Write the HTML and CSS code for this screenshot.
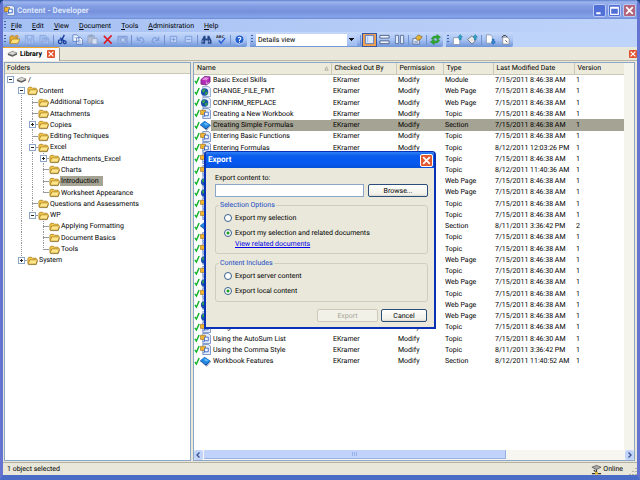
FILE: index.html
```html
<!DOCTYPE html>
<html lang="en">
<head>
<meta charset="utf-8">
<title>Content - Developer</title>
<link rel="stylesheet" href="styles.css">
</head>
<body>
<svg class="sprite" aria-hidden="true">
  <symbol id="folder" viewBox="0 0 12 12"><path d="M1 9.500V3.500l1-1h3l1 1h4v2" fill="#f3c74e" stroke="#a67c14" stroke-width=".8"/><path d="M1.200 10L3 5.300h8.500L10 10z" fill="#ffe58a" stroke="#a67c14" stroke-width=".8"/><path d="M1.500 10.500h8.500l1.500-4" fill="none" stroke="#6d5212" stroke-width=".6"/></symbol>
  <symbol id="drive" viewBox="0 0 12 12"><path d="M1 6l5-2.500 5 2v1.500L6 9.500 1 7.500z" fill="#555"/><path d="M1 6l5-2.500 5 2L6 8z" fill="#d8d8d4" stroke="#777" stroke-width=".5"/></symbol>
  <symbol id="check" viewBox="0 0 7 12"><path d="M1 6.500l1.800 2.500L6 2" fill="none" stroke="#12b428" stroke-width="1.700"/></symbol>
  <symbol id="module" viewBox="0 0 12 12"><path d="M1 5l4-3.500 6 .5v6l-4 3-6-1z" fill="#b12bb5" stroke="#5d1266" stroke-width=".7"/><path d="M2 5l3.500-2.500 4.500.500L7 6z" fill="#e58ae2"/><path d="M7 7v3l3-2" fill="none" stroke="#f0d0f0" stroke-width=".7"/></symbol>
  <symbol id="web" viewBox="0 0 12 12"><path d="M3 .5h6l2.500 2v9H3z" fill="#e9f0fc" stroke="#6b88bd" stroke-width=".7"/><circle cx="5" cy="6.500" r="4" fill="#1b4fae"/><path d="M2 5l2-2 2 1-1 2-2 1zM5 8l2-2 1.500 1L7 10z" fill="#35a548"/></symbol>
  <symbol id="topic" viewBox="0 0 12 12"><path d="M3 .5h6l2.500 2v9H3z" fill="#e4ecfb" stroke="#5878b5" stroke-width=".8"/><path d="M.5 2.500h5.500v4.500h-5.500z" fill="#f4b52f" stroke="#8d6418" stroke-width=".6"/><path d="M5 4.500h4v4H5z" fill="#fff" stroke="#2c59b8" stroke-width=".9"/><path d="M4 10l1-2" stroke="#2c59b8"/></symbol>
  <symbol id="section" viewBox="0 0 12 12"><path d="M0 5.500L5 1l7 5-5 5.500z" fill="#082d70"/><path d="M0 5L5 1l6.500 4.500-5 4z" fill="#2388e2"/><path d="M1 6.500l5.500 4.500 5-5" fill="none" stroke="#e5f1ff" stroke-width=".7"/><path d="M4 4l2-1 3 2-2 1z" fill="#6dbdf8"/></symbol>
  <symbol id="online" viewBox="0 0 12 12"><path d="M1 3.500l5-2 5 2-5 2.500z" fill="#aaa" stroke="#444" stroke-width=".7"/><path d="M6 6v3M1 10.500h4M7 10.500h4M3 6.500l2 2" stroke="#333" stroke-width="1.200"/><path d="M4.500 8.500h3v3h-3z" fill="#d9b42d"/></symbol>
  <symbol id="close" viewBox="0 0 10 10"><path d="M2 2l6 6M8 2L2 8" stroke="#fff" stroke-width="1.600"/></symbol>
</svg>

<div class="window">
  <header class="titlebar">
    <svg class="icon"><use href="#topic"/></svg>
    <h1>Content - Developer</h1>
    <button class="caption" aria-label="Minimize"><svg viewBox="0 0 10 10"><path d="M2 7.500h4" stroke="#fff" stroke-width="1.800"/></svg></button>
    <button class="caption" aria-label="Maximize"><svg viewBox="0 0 10 10"><path d="M1.500 2h7v6.500h-7zM1.500 3h7" fill="none" stroke="#fff"/></svg></button>
    <button class="caption dim-close" aria-label="Close"><svg><use href="#close"/></svg></button>
  </header>

  <nav class="menubar">
    <span class="grip"></span>
    <button><u>F</u>ile</button><button><u>E</u>dit</button><button><u>V</u>iew</button><button><u>D</u>ocument</button><button><u>T</u>ools</button><button><u>A</u>dministration</button><button><u>H</u>elp</button>
  </nav>

  <div class="toolbars">
    <div class="toolbar">
      <span class="grip"></span>
      <button class="tool" aria-label="Open"><svg viewBox="0 0 12 12"><path d="M1 10V3l1-1h3l1 1h3v3" fill="#e9b137" stroke="#9a6c12" stroke-width=".7"/><path d="M1 10.500L3.500 5.500H12L9.500 10.500z" fill="#ffe07a" stroke="#9a6c12" stroke-width=".7"/><path d="M7 1.500q3-1 3.500 2" fill="none" stroke="#e98a19"/></svg></button>
      <button class="tool" aria-label="Save" disabled><svg viewBox="0 0 12 12"><path d="M1.500 1.500h9v9h-9zM3.500 1.500v4h5v-4M4 10.500v-3h4v3" fill="#a5bfef" stroke="#8ba8e0"/></svg></button>
      <button class="tool" aria-label="Save all" disabled><svg viewBox="0 0 12 12"><path d="M1 1.500h6l1 1v6H1zM4 4.500h6.500v6H4zM6 4.500v2h3v-2" fill="#a5bfef" stroke="#8ba8e0"/></svg></button>
      <span class="sep"></span>
      <button class="tool" aria-label="Cut"><svg viewBox="0 0 12 12"><path d="M8 1L5 7M3.500 4L8 8" stroke="#173e9c" stroke-width="1.500"/><circle cx="3.500" cy="8.500" r="2" fill="none" stroke="#173e9c" stroke-width="1.300"/><circle cx="8.500" cy="9" r="1.500" fill="none" stroke="#173e9c" stroke-width="1.300"/></svg></button>
      <button class="tool" aria-label="Copy"><svg viewBox="0 0 12 12"><path d="M1 1h4.500l2 2v5H1zM5 4h4.500l2 2v5H5z" fill="#f2f6ff" stroke="#4a70bd" stroke-width=".8"/><path d="M6.500 7.500h3.500M6.500 9h3.500M2.500 4h2" stroke="#7a9bdb" stroke-width=".7"/></svg></button>
      <button class="tool" aria-label="Paste" disabled><svg viewBox="0 0 12 12"><path d="M1 2h7v8H1zM3 1h3v2H3z" fill="#b5bfd3" stroke="#8b9dc4" stroke-width=".8"/><path d="M5.500 5h5.500v6H5.500z" fill="#d8e1f3" stroke="#8b9dc4" stroke-width=".8"/></svg></button>
      <button class="tool" aria-label="Delete"><svg viewBox="0 0 12 12"><path d="M2 2l8.500 8.500M10.500 1.500L2 10.500" stroke="#dd1c24" stroke-width="1.700"/></svg></button>
      <button class="tool" aria-label="Capture" disabled><svg viewBox="0 0 12 12"><path d="M1 2.500h10v8H1z" fill="#9cb4e4" stroke="#7d99d4"/><circle cx="6.500" cy="6.500" r="2.500" fill="#bccef2" stroke="#7d99d4"/></svg></button>
      <span class="sep"></span>
      <button class="tool" aria-label="Undo" disabled><svg viewBox="0 0 12 12"><path d="M2.500 3v4h4M3 6.500q4-4.500 6-1t-2 4" fill="none" stroke="#7f9cdb" stroke-width="1.300"/></svg></button>
      <button class="tool" aria-label="Redo" disabled><svg viewBox="0 0 12 12"><path d="M9.500 3v4h-4M9 6.500q-4-4.500-6-1t2 4" fill="none" stroke="#7f9cdb" stroke-width="1.300"/></svg></button>
      <span class="sep"></span>
      <button class="tool" aria-label="Expand" disabled><svg viewBox="0 0 12 12"><path d="M2.500 2.500h7v7h-7zM6 4v4M4 6h4" fill="#b9cff8" stroke="#7b9ad9"/></svg></button>
      <button class="tool" aria-label="Collapse" disabled><svg viewBox="0 0 12 12"><path d="M2.500 2.500h7v7h-7zM4 6h4" fill="#b9cff8" stroke="#7b9ad9"/></svg></button>
      <span class="sep"></span>
      <button class="tool" aria-label="Find"><svg viewBox="0 0 12 12"><path d="M3 2h2v3h2V2h2l2.500 5v3.500H7.500V7h-3v3.500H.5V7z" fill="#27498c"/><path d="M2 7v2M9 7v2" stroke="#b5cbf5"/></svg></button>
      <button class="tool" aria-label="Spelling"><svg viewBox="0 0 12 12"><text x="0" y="4.500" class="abc">ABC</text><path d="M3 7l2.500 3L10 4.500" fill="none" stroke="#2a5fd0" stroke-width="1.600"/></svg></button>
      <span class="sep"></span>
      <button class="tool" aria-label="Help"><svg viewBox="0 0 12 12"><circle cx="6" cy="6" r="5" fill="#2461cf" stroke="#dce8ff" stroke-width=".9"/><path d="M4.500 4.500q1.500-2 3 0 0 1-1.500 2v1M6 8.500v1" fill="none" stroke="#fff" stroke-width="1.100"/></svg></button>
    </div>

    <div class="toolbar">
      <span class="grip"></span>
      <select class="view-select" aria-label="View"><option>Details view</option></select>
      <span class="sep"></span>
      <button class="tool pressed" aria-label="Single pane"><svg viewBox="0 0 12 12"><path d="M1.500 1.500h9v9h-9z" fill="#dce9ff" stroke="#5578bd"/><path d="M4 3v6" stroke="#9ab6ea"/></svg></button>
      <button class="tool" aria-label="Stacked panes"><svg viewBox="0 0 12 12"><path d="M1 1.500h10v3H1zM1 7.500h10v3H1z" fill="#eef4ff" stroke="#4d5f85"/></svg></button>
      <button class="tool" aria-label="Side by side panes"><svg viewBox="0 0 12 12"><path d="M1.500 1.500h3.500v9H1.500zM7 1.500h3.500v9H7z" fill="#dfeaff" stroke="#5c7099"/></svg></button>
      <span class="sep"></span>
      <button class="tool" aria-label="Properties"><svg viewBox="0 0 12 12"><path d="M1 5h7v6H1z" fill="#eef3fb" stroke="#4e6286" stroke-width=".8"/><path d="M4 4l3-3 4 2-2 3-3 1z" fill="#e9b536" stroke="#7c5a14" stroke-width=".7"/><path d="M2.500 8h4M2.500 9.500h4" stroke="#5275b4" stroke-width=".7"/></svg></button>
      <span class="sep"></span>
      <button class="tool" aria-label="Refresh"><svg viewBox="0 0 12 12"><path d="M1.500 5.500q1.500-4 6-3V.5l4 3-4 2.500V4.500Q4 3.500 3.500 6z" fill="#2cb02a" stroke="#127414" stroke-width=".5"/><path d="M10.500 6.500q-1.500 4-6 3v2l-4-3 4-2.500v1.500q3.500 1 4-1.500z" fill="#2cb02a" stroke="#127414" stroke-width=".5"/></svg></button>
    </div>

    <div class="toolbar">
      <span class="grip"></span>
      <button class="tool" aria-label="Check out"><svg viewBox="0 0 12 12"><path d="M1.500 4h5l2 2v5.500h-7z" fill="#fff" stroke="#6f7f9d" stroke-width=".7"/><path d="M9 .5l2.500 3h-1.500v3H8v-3H6.500z" fill="#2aa3c9" stroke="#17667f" stroke-width=".4"/></svg></button>
      <button class="tool" aria-label="Publish"><svg viewBox="0 0 12 12"><path d="M.5 6l5-4 3 3v3l-3 3z" fill="#e8e8e8" stroke="#59606e" stroke-width=".8"/><path d="M9 .5l2.500 3h-1.500v3H8v-3H6.500z" fill="#2aa3c9" stroke="#17667f" stroke-width=".4"/></svg></button>
      <span class="sep"></span>
      <button class="tool" aria-label="Check in"><svg viewBox="0 0 12 12"><path d="M1.500 1h4.500l2 2v7h-6.500z" fill="#fff" stroke="#6f7f9d" stroke-width=".7"/><path d="M9 11.500l2.500-3h-1.500v-3H8v3H6.500z" fill="#2a86d9" stroke="#174f8f" stroke-width=".4"/></svg></button>
      <button class="tool" aria-label="Undo check out"><svg viewBox="0 0 12 12"><path d="M3 3.500h5l2 2v5.500H3z" fill="#fff" stroke="#777" stroke-width=".7"/><path d="M2 4q1-3 4-2.500l2 2M6 7l2 2" fill="none" stroke="#333"/></svg></button>
    </div>
  </div>

  <div class="tabstrip">
    <div class="tab"><svg class="icon"><use href="#drive"/></svg><span>Library</span><button class="tab-close" aria-label="Close tab"><svg><use href="#close"/></svg></button></div>
    <button class="tab-close" aria-label="Close pane"><svg><use href="#close"/></svg></button>
  </div>

  <main class="panes">
    <section class="folders">
      <h2>Folders</h2>
      <ul class="tree">
        <li><i class="c"><button class="tg" aria-label="Collapse"></button></i><svg class="icon"><use href="#drive"/></svg><span>/</span></li>
        <li><i class="c"></i><i class="c below"><button class="tg" aria-label="Collapse"></button></i><svg class="icon"><use href="#folder"/></svg><span>Content</span></li>
        <li><i class="c"></i><i class="c v"></i><i class="c v h"></i><svg class="icon"><use href="#folder"/></svg><span>Additional Topics</span></li>
        <li><i class="c"></i><i class="c v"></i><i class="c v h"></i><svg class="icon"><use href="#folder"/></svg><span>Attachments</span></li>
        <li><i class="c"></i><i class="c v"></i><i class="c v h"><button class="tg plus" aria-label="Expand"></button></i><svg class="icon"><use href="#folder"/></svg><span>Copies</span></li>
        <li><i class="c"></i><i class="c v"></i><i class="c v h"></i><svg class="icon"><use href="#folder"/></svg><span>Editing Techniques</span></li>
        <li><i class="c"></i><i class="c v"></i><i class="c v h"><button class="tg" aria-label="Collapse"></button></i><svg class="icon"><use href="#folder"/></svg><span>Excel</span></li>
        <li><i class="c"></i><i class="c v"></i><i class="c v"></i><i class="c v h"><button class="tg plus" aria-label="Expand"></button></i><svg class="icon"><use href="#folder"/></svg><span>Attachments_Excel</span></li>
        <li><i class="c"></i><i class="c v"></i><i class="c v"></i><i class="c v h"></i><svg class="icon"><use href="#folder"/></svg><span>Charts</span></li>
        <li class="current"><i class="c"></i><i class="c v"></i><i class="c v"></i><i class="c v h"></i><svg class="icon"><use href="#folder"/></svg><span>Introduction</span></li>
        <li><i class="c"></i><i class="c v"></i><i class="c v"></i><i class="c end h"></i><svg class="icon"><use href="#folder"/></svg><span>Worksheet Appearance</span></li>
        <li><i class="c"></i><i class="c v"></i><i class="c v h"></i><svg class="icon"><use href="#folder"/></svg><span>Questions and Assessments</span></li>
        <li><i class="c"></i><i class="c v"></i><i class="c end h"><button class="tg" aria-label="Collapse"></button></i><svg class="icon"><use href="#folder"/></svg><span>WP</span></li>
        <li><i class="c"></i><i class="c v"></i><i class="c"></i><i class="c v h"></i><svg class="icon"><use href="#folder"/></svg><span>Applying Formatting</span></li>
        <li><i class="c"></i><i class="c v"></i><i class="c"></i><i class="c v h"></i><svg class="icon"><use href="#folder"/></svg><span>Document Basics</span></li>
        <li><i class="c"></i><i class="c v"></i><i class="c"></i><i class="c end h"></i><svg class="icon"><use href="#folder"/></svg><span>Tools</span></li>
        <li><i class="c"></i><i class="c end h"><button class="tg plus" aria-label="Expand"></button></i><svg class="icon"><use href="#folder"/></svg><span>System</span></li>
      </ul>
    </section>

    <section class="list">
      <div class="list-view">
        <table>
          <colgroup><col class="w-name"><col class="w-out"><col class="w-perm"><col class="w-type"><col class="w-date"><col></colgroup>
          <thead><tr><th><div class="sorted">Name<svg viewBox="0 0 6 6"><path d="M1 5l2-4 2 4z" fill="none" stroke="#aaa796"/></svg></div></th><th>Checked Out By</th><th>Permission</th><th>Type</th><th>Last Modified Date</th><th>Version</th></tr></thead>
          <tbody>
            <tr><td><div class="name"><svg class="tick"><use href="#check"/></svg><svg class="icon"><use href="#module"/></svg><span>Basic Excel Skills</span></div></td><td>EKramer</td><td>Modify</td><td>Module</td><td>7/15/2011 8:46:38 AM</td><td>1</td></tr>
            <tr><td><div class="name"><svg class="tick"><use href="#check"/></svg><svg class="icon"><use href="#web"/></svg><span>CHANGE_FILE_FMT</span></div></td><td>EKramer</td><td>Modify</td><td>Web Page</td><td>7/15/2011 8:46:38 AM</td><td>1</td></tr>
            <tr><td><div class="name"><svg class="tick"><use href="#check"/></svg><svg class="icon"><use href="#web"/></svg><span>CONFIRM_REPLACE</span></div></td><td>EKramer</td><td>Modify</td><td>Web Page</td><td>7/15/2011 8:46:38 AM</td><td>1</td></tr>
            <tr><td><div class="name"><svg class="tick"><use href="#check"/></svg><svg class="icon"><use href="#topic"/></svg><span>Creating a New Workbook</span></div></td><td>EKramer</td><td>Modify</td><td>Topic</td><td>7/15/2011 8:46:38 AM</td><td>1</td></tr>
            <tr class="selected"><td><div class="name"><svg class="tick"><use href="#check"/></svg><svg class="icon"><use href="#section"/></svg><span>Creating Simple Formulas</span></div></td><td>EKramer</td><td>Modify</td><td>Section</td><td>7/15/2011 8:46:38 AM</td><td>1</td></tr>
            <tr><td><div class="name"><svg class="tick"><use href="#check"/></svg><svg class="icon"><use href="#topic"/></svg><span>Entering Basic Functions</span></div></td><td>EKramer</td><td>Modify</td><td>Topic</td><td>7/15/2011 8:46:38 AM</td><td>1</td></tr>
            <tr><td><div class="name"><svg class="tick"><use href="#check"/></svg><svg class="icon"><use href="#topic"/></svg><span>Entering Formulas</span></div></td><td>EKramer</td><td>Modify</td><td>Topic</td><td>8/12/2011 12:03:26 PM</td><td>1</td></tr>
            <tr><td><div class="name"><svg class="tick"><use href="#check"/></svg><svg class="icon"><use href="#topic"/></svg></div></td><td></td><td></td><td>Topic</td><td>7/15/2011 8:46:38 AM</td><td>1</td></tr>
            <tr><td><div class="name"><svg class="tick"><use href="#check"/></svg><svg class="icon"><use href="#topic"/></svg></div></td><td></td><td></td><td>Topic</td><td>8/12/2011 11:40:36 AM</td><td>1</td></tr>
            <tr><td><div class="name"><svg class="tick"><use href="#check"/></svg><svg class="icon"><use href="#web"/></svg></div></td><td></td><td></td><td>Web Page</td><td>7/15/2011 8:46:38 AM</td><td>1</td></tr>
            <tr><td><div class="name"><svg class="tick"><use href="#check"/></svg><svg class="icon"><use href="#web"/></svg></div></td><td></td><td></td><td>Web Page</td><td>7/15/2011 8:46:38 AM</td><td>1</td></tr>
            <tr><td><div class="name"><svg class="tick"><use href="#check"/></svg><svg class="icon"><use href="#topic"/></svg></div></td><td></td><td></td><td>Topic</td><td>7/15/2011 8:46:38 AM</td><td>1</td></tr>
            <tr><td><div class="name"><svg class="tick"><use href="#check"/></svg><svg class="icon"><use href="#topic"/></svg></div></td><td></td><td></td><td>Topic</td><td>7/15/2011 8:46:38 AM</td><td>1</td></tr>
            <tr><td><div class="name"><svg class="tick"><use href="#check"/></svg><svg class="icon"><use href="#section"/></svg></div></td><td></td><td></td><td>Section</td><td>8/11/2011 3:36:42 PM</td><td>2</td></tr>
            <tr><td><div class="name"><svg class="tick"><use href="#check"/></svg><svg class="icon"><use href="#topic"/></svg></div></td><td></td><td></td><td>Topic</td><td>7/15/2011 8:46:38 AM</td><td>1</td></tr>
            <tr><td><div class="name"><svg class="tick"><use href="#check"/></svg><svg class="icon"><use href="#topic"/></svg></div></td><td></td><td></td><td>Topic</td><td>7/15/2011 8:46:38 AM</td><td>1</td></tr>
            <tr><td><div class="name"><svg class="tick"><use href="#check"/></svg><svg class="icon"><use href="#web"/></svg></div></td><td></td><td></td><td>Web Page</td><td>7/15/2011 8:46:38 AM</td><td>1</td></tr>
            <tr><td><div class="name"><svg class="tick"><use href="#check"/></svg><svg class="icon"><use href="#topic"/></svg></div></td><td></td><td></td><td>Topic</td><td>7/15/2011 8:46:30 AM</td><td>1</td></tr>
            <tr><td><div class="name"><svg class="tick"><use href="#check"/></svg><svg class="icon"><use href="#web"/></svg></div></td><td></td><td></td><td>Web Page</td><td>7/15/2011 8:46:38 AM</td><td>1</td></tr>
            <tr><td><div class="name"><svg class="tick"><use href="#check"/></svg><svg class="icon"><use href="#topic"/></svg></div></td><td></td><td></td><td>Topic</td><td>7/15/2011 8:46:38 AM</td><td>1</td></tr>
            <tr><td><div class="name"><svg class="tick"><use href="#check"/></svg><svg class="icon"><use href="#web"/></svg></div></td><td></td><td></td><td>Web Page</td><td>7/15/2011 8:46:38 AM</td><td>1</td></tr>
            <tr><td><div class="name"><svg class="tick"><use href="#check"/></svg><svg class="icon"><use href="#web"/></svg></div></td><td></td><td></td><td>Web Page</td><td>7/15/2011 8:46:38 AM</td><td>1</td></tr>
            <tr><td><div class="name"><svg class="tick"><use href="#check"/></svg><svg class="icon"><use href="#topic"/></svg><span>Using</span></div></td><td>EKramer</td><td>Modify</td><td>Topic</td><td>7/15/2011 8:46:38 AM</td><td>1</td></tr>
            <tr><td><div class="name"><svg class="tick"><use href="#check"/></svg><svg class="icon"><use href="#topic"/></svg><span>Using the AutoSum List</span></div></td><td>EKramer</td><td>Modify</td><td>Topic</td><td>7/15/2011 8:46:30 AM</td><td>1</td></tr>
            <tr><td><div class="name"><svg class="tick"><use href="#check"/></svg><svg class="icon"><use href="#topic"/></svg><span>Using the Comma Style</span></div></td><td>EKramer</td><td>Modify</td><td>Topic</td><td>8/11/2011 3:36:42 PM</td><td>1</td></tr>
            <tr><td><div class="name"><svg class="tick"><use href="#check"/></svg><svg class="icon"><use href="#section"/></svg><span>Workbook Features</span></div></td><td>EKramer</td><td>Modify</td><td>Section</td><td>8/12/2011 11:40:52 AM</td><td>1</td></tr>
          </tbody>
        </table>
        <div class="vscroll"></div>
      </div>
      <div class="hscroll">
        <button aria-label="Scroll left"><svg viewBox="0 0 8 8"><path d="M5 1.500L2.500 4 5 6.500" fill="none" stroke="#3c5590" stroke-width="1.400"/></svg></button>
        <div class="track"><div class="thumb"></div></div>
        <button aria-label="Scroll right"><svg viewBox="0 0 8 8"><path d="M3 1.500L5.500 4 3 6.500" fill="none" stroke="#3c5590" stroke-width="1.400"/></svg></button>
      </div>
    </section>
  </main>

  <footer class="status"><span>1 object selected</span><span class="online"><svg class="icon"><use href="#online"/></svg>Online</span><svg class="resize" viewBox="0 0 8 8"><path d="M6 1h2v1H6zM3 4h2v1H3zM6 4h2v1H6zM0 7h2v1H0zM3 7h2v1H3zM6 7h2v1H6z" fill="#b5b2a0"/></svg></footer>
</div>

<div class="overlay">
  <form class="dialog" role="dialog" aria-labelledby="dialog-title">
    <header><h2 id="dialog-title">Export</h2><button type="button" class="dialog-close" aria-label="Close"><svg><use href="#close"/></svg></button></header>
    <div class="dialog-body">
      <label for="path">Export content to:</label>
      <div class="path-row"><input type="text" id="path"><button type="button" class="btn">Browse...</button></div>
      <fieldset>
        <legend>Selection Options</legend>
        <label class="radio"><input type="radio" name="selection">Export my selection</label>
        <label class="radio"><input type="radio" name="selection" checked>Export my selection and related documents</label>
        <a href="#related">View related documents</a>
      </fieldset>
      <fieldset>
        <legend>Content Includes</legend>
        <label class="radio"><input type="radio" name="source">Export server content</label>
        <label class="radio"><input type="radio" name="source" checked>Export local content</label>
      </fieldset>
      <div class="actions"><button class="btn" disabled>Export</button><button type="button" class="btn cancel">Cancel</button></div>
    </div>
  </form>
</div>
</body>
</html>
```
FILE: styles.css
```css
* { box-sizing: border-box; }

body {
  margin: 0;
  background: #17457e;
  color: #000;
  font: 7px/10px Roboto, "Liberation Sans", sans-serif;
  text-rendering: geometricPrecision;
}

h1, h2, ul, fieldset { margin: 0; padding: 0; font-size: inherit; }
button, input, select { margin: 0; padding: 0; border: 0; background: none; color: inherit; font: inherit; text-rendering: inherit; }
svg { display: block; flex: none; }
.sprite { position: absolute; width: 0; height: 0; }
.icon { width: 11px; height: 11px; }

.window {
  display: flex;
  flex-direction: column;
  height: 100vh;
  border: 3px solid #6474d0;
  border-top: 0;
  border-bottom: 5px solid #4a6cc6;
  border-radius: 5px 5px 0 0;
  overflow: hidden;
  background: #e8e7d9;
}

/* Title bar */
.titlebar {
  display: flex;
  align-items: center;
  gap: 2px;
  height: 19px;
  padding: 2px 1px 0;
  background: linear-gradient(#5f7fcb, #9db6f0 2px, #829ee4 6px, #7790da 12px, #86a5ea 17px, #6f8ad4);
}
.titlebar h1 { flex: 1; color: #dbe6fb; font-size: 8px; }
.caption {
  width: 13px;
  height: 13px;
  border: 1px solid #b9c9f4;
  border-radius: 2px;
  background: #5070d8;
}
.caption svg { width: 11px; height: 11px; }
.dim-close { background: #b4637c; }

/* Menus and toolbars */
.menubar {
  display: flex;
  align-items: center;
  gap: 10px;
  height: 13px;
  background: linear-gradient(90deg, #a5c0f3, #bfd3f9);
}
.menubar .grip { margin-right: -5px; }
.grip {
  width: 2px;
  height: 9px;
  margin: 0 1px;
  background: repeating-linear-gradient(#3f5fa8 0 1px, transparent 1px 3px);
}
.toolbars { display: flex; gap: 3px; height: 15px; background: #bed3f9; }
.toolbar {
  display: flex;
  align-items: center;
  background: linear-gradient(#c6d9fb, #a7c2f2 8px, #6f94d8);
  border-radius: 0 2px 2px 0;
}
.tool {
  display: grid;
  place-items: center;
  width: 15px;
  height: 14px;
}
.tool svg { width: 11px; height: 11px; }
.abc { font: bold 4px "DejaVu Sans", sans-serif; fill: #333; }
.pressed { border: 1px solid #3555a5; background: #f4a04c; }
.sep { width: 1px; height: 10px; margin: 0 1px; background: #7090d0; }
.view-select {
  width: 101px;
  height: 12px;
  margin: 0 2px;
  padding-left: 2px;
  appearance: none;
  background:
    linear-gradient(#111, #111) right 4px top 5px / 3px 1px no-repeat,
    linear-gradient(#111, #111) right 3px top 4px / 5px 1px no-repeat,
    linear-gradient(#111, #111) right 5px top 6px / 1px 1px no-repeat,
    linear-gradient(#c3d6fb, #9dbbf0) right / 10px 100% no-repeat,
    #fff;
}

/* Tabs */
.tabstrip {
  display: flex;
  align-items: center;
  justify-content: space-between;
  height: 14px;
  border-bottom: 1px solid #b9b7a6;
}
.tab {
  display: flex;
  align-items: center;
  gap: 2px;
  height: 14px;
  padding: 0 4px 1px;
  border-top: 1px solid #f5a623;
  border-right: 1px solid #98968a;
  border-radius: 0 2px 0 0;
  background: #fbfaf6;
  font-weight: bold;
}
.tab-close { width: 8px; height: 8px; border-radius: 1px; background: #e0532c; }
.tab .tab-close { margin-left: 3px; }
.tab-close svg { width: 8px; height: 8px; }

/* Panes */
.panes { display: flex; flex: 1; gap: 2px; min-height: 0; padding: 1px 2px 1px 1px; }
.folders { width: 187px; border: 1px solid #8ba6c6; background: #fff; }
.folders h2, th {
  height: 11px;
  border-bottom: 1px solid #cbc8b6;
  background: #ebeadb;
  font-weight: normal;
  line-height: 10px;
}
.folders h2 { padding-left: 2px; }
.tree {
  display: grid;
  grid-auto-rows: 1fr;
  height: 192px;
  list-style: none;
}
.tree li { display: flex; align-items: center; }
.tree span { padding: 0 1px; white-space: nowrap; }
.current span { padding: 0 4px 0 1px; background: #a5a393; }
.c {
  --dots: repeating-linear-gradient(#999 0 1px, transparent 1px 2px);
  --dash: linear-gradient(#999, #999);
  display: grid;
  place-items: center;
  align-self: stretch;
  width: 11px;
  background-repeat: no-repeat;
}
.v { background-image: var(--dots); background-position: 5px 0; background-size: 1px 100%; }
.below { background-image: var(--dots); background-position: 5px 6px; background-size: 1px 100%; }
.v.h { background-image: var(--dots), var(--dash); background-position: 5px 0, 5px 50%; background-size: 1px 100%, 6px 1px; }
.end.h { background-image: var(--dots), var(--dash); background-position: 5px 0, 5px 50%; background-size: 1px 50%, 6px 1px; }
.tg {
  width: 7px;
  height: 7px;
  border: 1px solid #8ba6c6;
  background: linear-gradient(#222, #222) center / 3px 1px no-repeat, #fff;
}
.plus { background: linear-gradient(#222, #222) center / 3px 1px no-repeat, linear-gradient(#222, #222) center / 1px 3px no-repeat, #fff; }

.list {
  display: flex;
  flex: 1;
  flex-direction: column;
  border: 1px solid #8ba6c6;
  background: #fff;
}
.list-view { display: flex; flex: 1; align-items: flex-start; }
table { flex: 1; height: 304px; border-collapse: collapse; table-layout: fixed; }
.w-name { width: 137px; }
.w-out { width: 65px; }
.w-perm { width: 47px; }
.w-type { width: 50px; }
.w-date { width: 81px; }
th { padding: 0 0 0 3px; text-align: left; white-space: nowrap; }
th + th { border-left: 1px solid #cbc8b6; }
.sorted { display: flex; align-items: center; justify-content: space-between; padding-right: 2px; }
.sorted svg { width: 5px; height: 5px; }
td { padding: 0 0 0 2px; white-space: nowrap; }
td:first-child { padding: 0; }
.name { display: flex; align-items: center; height: 11px; }
.name span { flex: 1; padding-left: 2px; }
.tick { width: 6px; height: 11px; }
.selected td + td, .selected .name span { background: #a5a393; }
.selected .name span { line-height: 11px; }
.vscroll { align-self: stretch; width: 10px; background: #f4f3ec; }

.hscroll { display: flex; height: 10px; background: #f7f6f1; }
.hscroll button { width: 9px; border-radius: 2px; background: #c3d4fb; }
.hscroll button svg { width: 9px; height: 8px; }
.track { flex: 1; padding: 0 1px; }
.thumb {
  width: 72%;
  height: 9px;
  border-right: 1px solid #98b0e6;
  border-bottom: 1px solid #98b0e6;
  border-radius: 1px;
  background: repeating-linear-gradient(90deg, #9ab3ec 0 1px, transparent 1px 2px) center / 6px 4px no-repeat, #c1d2fb;
}

.status {
  display: flex;
  align-items: center;
  height: 13px;
  padding: 0 0 0 4px;
  border-top: 1px solid #b3b1a2;
}
.status span:first-child { flex: 1; }
.online { display: flex; align-items: center; gap: 1px; padding-right: 6px; }
.resize { width: 8px; height: 8px; align-self: flex-end; }

/* Export dialog */
.overlay { position: fixed; inset: 0; display: grid; place-items: center; }
.dialog {
  width: 232px;
  border: 2px solid #0831b5;
  border-top-width: 1px;
  border-radius: 4px 4px 0 0;
  overflow: hidden;
  background: #e9e8da;
}
.dialog header {
  display: flex;
  align-items: center;
  justify-content: space-between;
  height: 16px;
  padding: 0 1px 0 2px;
  background: linear-gradient(#2f80f8, #0a5ceb 4px, #0558f0 11px, #0550d8);
  color: #fff;
}
.dialog h2 { font-size: 8px; }
.dialog-close { width: 13px; height: 13px; border: 1px solid #fff; border-radius: 2px; background: #e2582f; }
.dialog-close svg { width: 11px; height: 11px; }
.dialog-body { padding: 5px 6px 5px 9px; }
.dialog-body > label { display: block; height: 11px; }
.path-row { display: flex; gap: 4px; height: 13px; margin-bottom: 3px; }
.path-row input { flex: 1; min-width: 0; border: 1px solid #8ba6c6; background: #fff; }
.path-row .btn { width: 60px; }
.btn {
  width: 61px;
  height: 13px;
  border: 1px solid #2a4d7c;
  border-radius: 2px;
  background: linear-gradient(#fdfdfb, #f2f1ea 9px, #dcd9cc);
}
.btn:disabled { border-color: #cdcab9; background: #f2f1e8; color: #a7a595; }
.actions { display: flex; justify-content: flex-end; gap: 3px; margin-top: 7px; padding-right: 1px; }
.actions .cancel { width: 46px; }
fieldset {
  margin-bottom: 4px;
  padding: 0 0 3px 8px;
  border: 1px solid #cfcdbc;
  border-radius: 3px;
}
legend { margin-left: -5px; padding: 0 1px; color: #1a4bc4; }
.radio { display: flex; align-items: center; gap: 3px; height: 15px; }
.radio input {
  appearance: none;
  width: 8px;
  height: 8px;
  border: 1px solid #3b5f8c;
  border-radius: 50%;
  background: #fff;
}
.radio input:checked { background: radial-gradient(circle, #21a121 0 1px, #fff 2px); }
fieldset a { display: block; padding: 0 0 2px 11px; color: #0000e6; line-height: 8px; }
```
